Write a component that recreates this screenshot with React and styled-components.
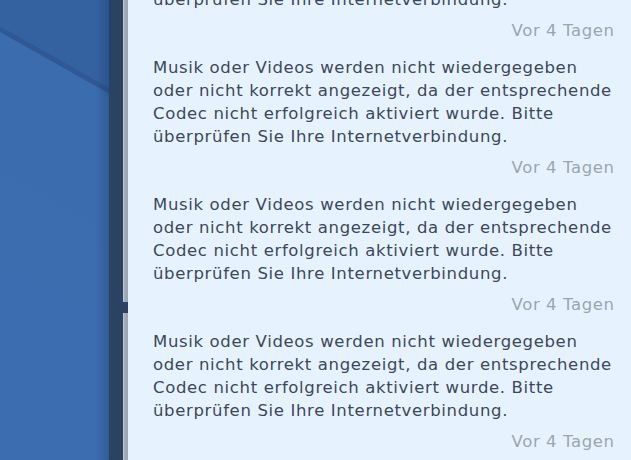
import styled, { createGlobalStyle } from "styled-components";

const lines = [
  "Musik oder Videos werden nicht wiedergegeben",
  "oder nicht korrekt angezeigt, da der entsprechende",
  "Codec nicht erfolgreich aktiviert wurde. Bitte",
  "überprüfen Sie Ihre Internetverbindung.",
];

const messages = [
  { id: 1, lines, time: "Vor 4 Tagen" },
  { id: 2, lines, time: "Vor 4 Tagen" },
  { id: 3, lines, time: "Vor 4 Tagen" },
  { id: 4, lines, time: "Vor 4 Tagen" },
];

function App() {
  return (
    <>
      <GlobalStyle />
      <Screen>
        <Wallpaper />
        <Strip />
        <Rail>
          <RailSegment $height="302px" />
          <RailSegment $grow />
        </Rail>
        <Panel>
          <List>
            {messages.map((m) => (
              <Item key={m.id}>
                <Body>
                  {m.lines.map((line, i) => (
                    <Line key={i}>{line}</Line>
                  ))}
                </Body>
                <Time>{m.time}</Time>
              </Item>
            ))}
          </List>
        </Panel>
      </Screen>
    </>
  );
}

const GlobalStyle = createGlobalStyle`
  html, body {
    margin: 0;
    padding: 0;
    overflow: hidden;
  }
`;

const Screen = styled.div`
  display: flex;
  width: 631px;
  height: 460px;
  overflow: hidden;
  font-family: "DejaVu Sans", Verdana, sans-serif;
`;

const Wallpaper = styled.div`
  width: 109px;
  flex-shrink: 0;
  background:
    linear-gradient(to right, rgba(20, 40, 80, 0) 88%, rgba(20, 40, 80, 0.25) 100%),
    linear-gradient(
      209.5deg,
      #3462a1 0px,
      #3462a1 76px,
      #2f5896 77px,
      #2f5894 81px,
      #3a6cae 82px,
      #3b6db0 100%
    );
`;

const Strip = styled.div`
  width: 14px;
  flex-shrink: 0;
  background: #2b4363;
`;

const Rail = styled.div`
  width: 5px;
  flex-shrink: 0;
  display: flex;
  flex-direction: column;
  gap: 11px;
  background: #2b4363;
`;

const RailSegment = styled.div`
  height: ${(p) => p.$height || "auto"};
  flex: ${(p) => (p.$grow ? 1 : "none")};
  background: linear-gradient(to right, #c3c8cf 0, #c3c8cf 1px, #a5adb8 1px, #9aa3ae 100%);
`;

const Panel = styled.div`
  flex: 1;
  overflow: hidden;
  background: #e6f3fe;
`;

const List = styled.div`
  margin-top: -81px;
  padding: 0 17px 0 25px;
  display: flex;
  flex-direction: column;
  gap: 14px;
`;

const Item = styled.div`
  display: flex;
  flex-direction: column;
`;

const Body = styled.p`
  margin: 0;
  font-size: 16.5px;
  line-height: 23px;
  letter-spacing: 0.65px;
  color: #3c4859;
`;

const Line = styled.span`
  display: block;
  white-space: nowrap;
`;

const Time = styled.span`
  margin-top: 8px;
  margin-right: -0.6px;
  align-self: flex-end;
  font-size: 16.5px;
  line-height: 23px;
  letter-spacing: 0.6px;
  color: #9da5ad;
`;

export default App;
